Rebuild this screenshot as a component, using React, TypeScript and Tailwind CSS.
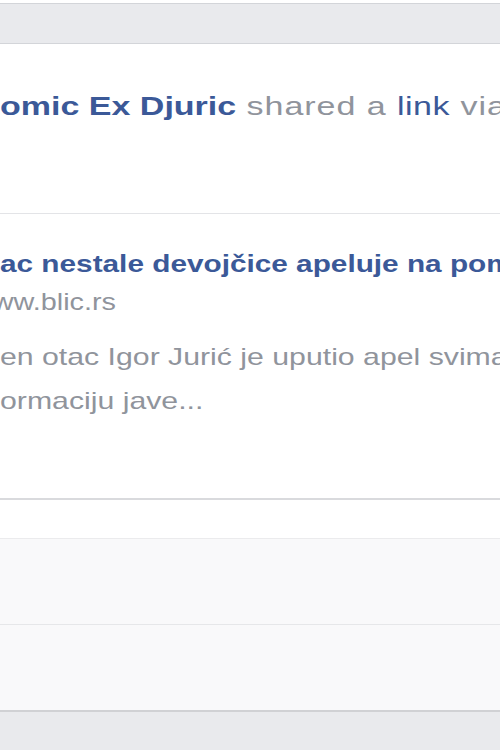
// Shared link post – cropped, zoomed-in view

const font = "font-['Liberation_Sans',Arial,sans-serif]"

export default function App() {
  return (
    <div className={`w-[500px] h-[750px] overflow-hidden bg-white ${font}`}>
      {/* top feed gap */}
      <div className="h-[3px] bg-white" />
      <div className="h-[41px] border-y border-[#d3d5d9] bg-[#e9eaed]" />

      {/* header */}
      <div className="h-[169px] bg-white pt-[47px]">
        <div className="origin-left scale-x-[1.36] whitespace-nowrap text-[25px] leading-[30px]">
          <span className="font-bold text-[#3b5998]">omic Ex Djuric</span>
          <span className="tracking-[0.7px] text-[#90949c]"> shared a </span>
          <span className="tracking-[0.4px] text-[#3b5998]">link</span>
          <span className="tracking-[0.7px] text-[#90949c]"> via</span>
        </div>
      </div>

      {/* link preview */}
      <div className="h-[285px] border-t border-[#e3e4e7] bg-white pt-[35px]">
        <div className="origin-left scale-x-[1.24] whitespace-nowrap text-[24px] font-bold leading-[30px] text-[#3b5998]">
          ac nestale devojčice apeluje na pomoć
        </div>
        <div className="mt-[8px] origin-left scale-x-[1.2] whitespace-nowrap text-[24px] leading-[30px] text-[#90949c]">
          <div className="-ml-[6px]">ww.blic.rs</div>
        </div>
        <div className="mt-[18px] origin-left scale-x-[1.26] text-[24px] leading-[44px] text-[#90949c]">
          <div className="whitespace-nowrap">en otac Igor Jurić je uputio apel svima</div>
          <div className="whitespace-nowrap">ormaciju jave...</div>
        </div>
      </div>
      <div className="h-[2px] bg-[#d9dadd]" />

      {/* footer rows */}
      <div className="h-[38px] bg-white" />
      <div className="h-[86px] border-t border-[#ebebed] bg-[#f9f9fa]" />
      <div className="h-[86px] border-t border-[#e6e7e9] bg-[#f9f9fa]" />
      <div className="h-[2px] bg-[#d0d1d4]" />
      <div className="h-[40px] bg-[#e9eaed]" />
    </div>
  )
}
